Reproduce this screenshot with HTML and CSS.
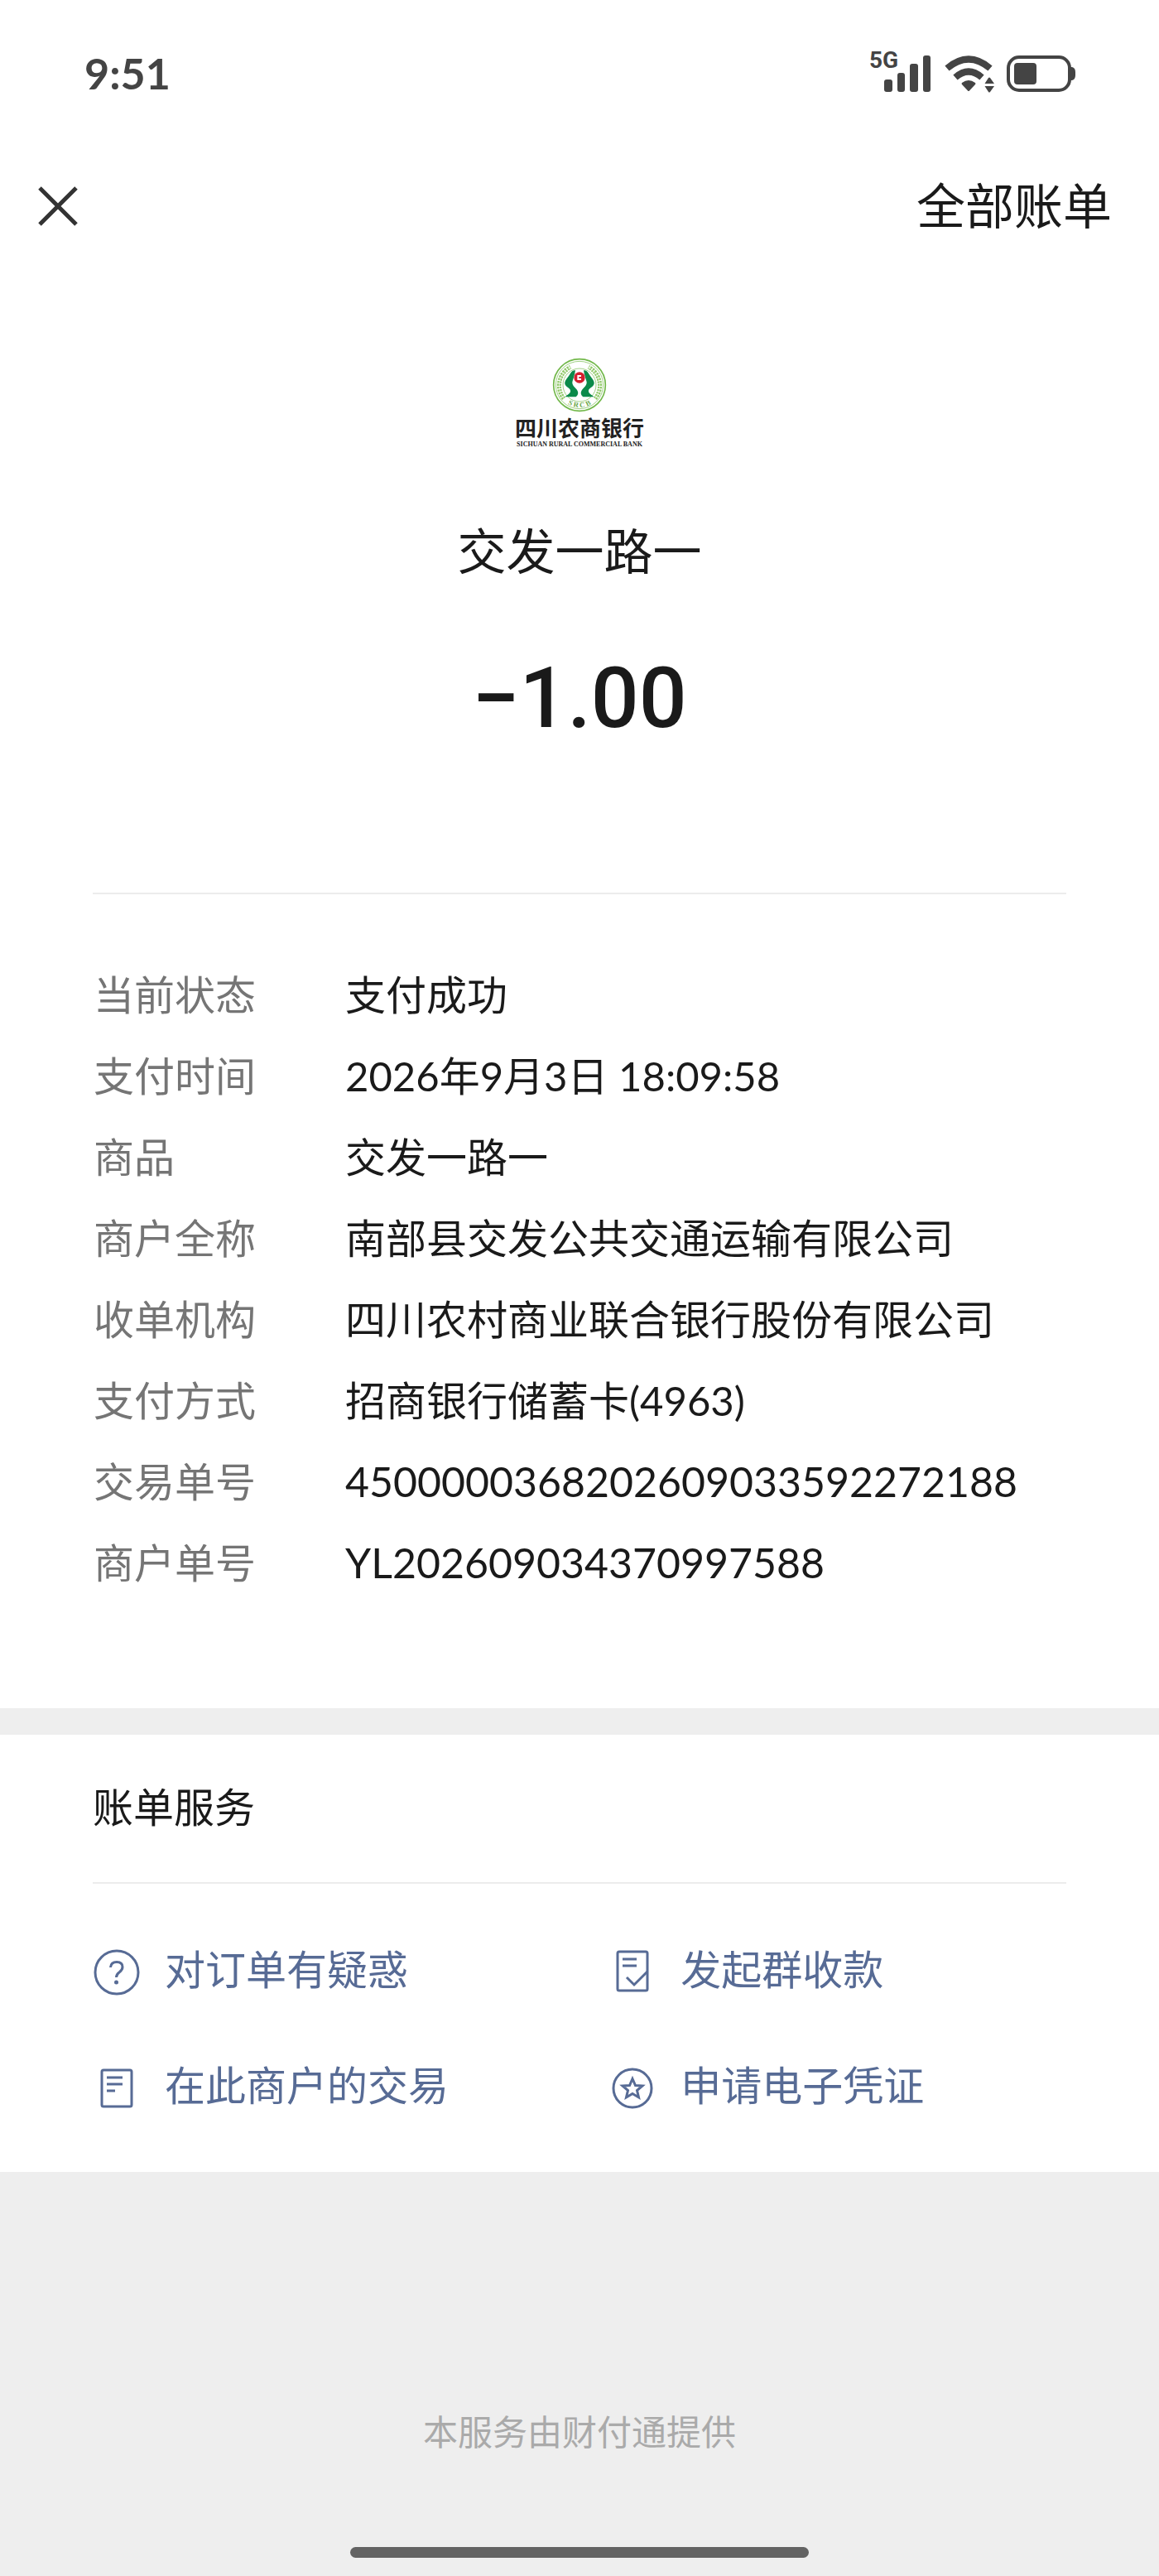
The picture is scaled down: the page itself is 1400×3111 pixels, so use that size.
FILE: index.html
```
<!DOCTYPE html>
<html lang="zh-CN">
<head>
    <meta charset="UTF-8">
    <meta name="viewport" content="width=device-width, initial-scale=1.0">
    <title>账单详情</title>
    <link rel="stylesheet" href="styles.css">
</head>
<body>
    <div class="status-bar">
        <span class="clock">9:51</span>
        <div class="status-icons">
            <svg class="signal" width="77" height="68" viewBox="0 -5 77 68" aria-hidden="true">
                <text class="network" x="1" y="22">5G</text>
                <rect x="19" y="36" width="10" height="15" rx="3"/>
                <rect x="35" y="28" width="9" height="23" rx="3"/>
                <rect x="50" y="17" width="10" height="34" rx="3"/>
                <rect x="66" y="7" width="9" height="44" rx="3"/>
            </svg>
            <svg width="62" height="46" viewBox="0 0 62 46" aria-hidden="true">
                <path class="wave" d="M4 16.500Q30-5.500 56 16.500"/>
                <path class="wave" d="M14 27.500Q30 13.500 46 27.500"/>
                <path d="M22 36Q21 35 22 34Q30 28 38 34Q39 35 38 36L31 43.500Q30 44.500 29 43.500Z"/>
                <path class="halo" d="M55 26L64 35V40L55 47L47 38V35Z"/>
                <path d="M49.500 35L54 28Q55 27 56 28L61 35ZM49.500 38H61L56 45Q55 46 54 45Z"/>
            </svg>
            <svg width="84" height="44" viewBox="0 0 84 44" aria-hidden="true">
                <rect class="battery-case" x="2" y="2" width="74" height="40" rx="13"/>
                <rect x="9" y="9" width="27" height="26" rx="4"/>
                <path d="M77 14h2q4 1 4 6v4q0 5-4 6h-2z"/>
            </svg>
        </div>
    </div>

    <header class="nav">
        <button class="close" aria-label="关闭">
            <svg width="48" height="48" viewBox="0 0 48 48"><path d="M2 2L46 46M46 2L2 46"/></svg>
        </button>
        <a class="all-bills" href="#">全部账单</a>
    </header>

    <main>
        <section class="bill">
            <div class="brand">
                <svg class="seal" width="66" height="66" viewBox="0 0 198 198" aria-hidden="true">
                    <circle class="ring" cx="99" cy="99" r="94"/>
                    <circle class="ring thin" cx="99" cy="99" r="86"/>
                    <circle class="ring thin" cx="99" cy="99" r="60"/>
                    <path class="wheat" d="M42 148A75 75 0 0 1 66 34"/>
                    <path class="wheat" d="M156 148A75 75 0 0 0 132 34"/>
                    <path class="stem" d="M42 148A75 75 0 0 1 66 34M156 148A75 75 0 0 0 132 34"/>
                    <path class="figure" d="M84 46C72 44 68 54 60 66C50 80 40 90 50 102C58 110 68 114 66 122C64 132 54 134 46 142H86C96 134 96 124 88 114C78 104 70 96 74 84C78 72 82 60 84 46Z"/>
                    <path class="figure" d="M114 46C126 44 130 54 138 66C148 80 158 90 148 102C140 110 130 114 132 122C134 132 144 134 152 142H112C102 134 102 124 110 114C120 104 128 96 124 84C120 72 116 60 114 46Z"/>
                    <circle class="coin" cx="99" cy="72" r="20"/>
                    <path class="coin-hole" d="M105 66H94V78H105"/>
                    <path id="arc" fill="none" d="M18 99A81 81 0 0 0 180 99"/>
                    <text class="seal-text"><textPath href="#arc" startOffset="50%">S R C B</textPath></text>
                </svg>
                <p class="bank-name">四川农商银行</p>
                <p class="bank-name-en">SICHUAN RURAL COMMERCIAL BANK</p>
            </div>
            <h1 class="payee">交发一路一</h1>
            <p class="amount">−1.00</p>

            <dl class="details">
                <div class="row"><dt>当前状态</dt><dd>支付成功</dd></div>
                <div class="row"><dt>支付时间</dt><dd>2026年9月3日 18:09:58</dd></div>
                <div class="row"><dt>商品</dt><dd>交发一路一</dd></div>
                <div class="row"><dt>商户全称</dt><dd>南部县交发公共交通运输有限公司</dd></div>
                <div class="row"><dt>收单机构</dt><dd>四川农村商业联合银行股份有限公司</dd></div>
                <div class="row"><dt>支付方式</dt><dd>招商银行储蓄卡(4963)</dd></div>
                <div class="row"><dt>交易单号</dt><dd class="number">4500000368202609033592272188</dd></div>
                <div class="row"><dt>商户单号</dt><dd class="number">YL202609034370997588</dd></div>
            </dl>
        </section>

        <section class="services">
            <h2>账单服务</h2>
            <nav class="links">
                <a href="#">
                    <svg width="56" height="56" viewBox="0 0 56 56" aria-hidden="true">
                        <circle cx="28" cy="28" r="26"/>
                        <path d="M20.500 22Q21 15.500 28 15.500Q35 15.500 35 21.500Q35 25 31 28Q27.500 30.500 27.500 34"/>
                        <circle class="dot" cx="27.500" cy="40" r="2.500"/>
                    </svg>
                    对订单有疑惑
                </a>
                <a href="#">
                    <svg width="56" height="56" viewBox="0 0 56 56" aria-hidden="true">
                        <rect x="10" y="3" width="36" height="47" rx="2"/>
                        <path d="M16 12H33M16 20H33M21 34L30 43L46 27"/>
                    </svg>
                    发起群收款
                </a>
                <a href="#">
                    <svg width="56" height="56" viewBox="0 0 56 56" aria-hidden="true">
                        <rect x="10" y="6" width="36" height="44" rx="2"/>
                        <path d="M16 15H35M16 23H35M16 31H26"/>
                    </svg>
                    在此商户的交易
                </a>
                <a href="#">
                    <svg width="56" height="56" viewBox="0 0 56 56" aria-hidden="true">
                        <circle cx="28" cy="28" r="23"/>
                        <path d="M28 16.500L31.500 24.500L40 25L33.500 30.500L35.500 39L28 34.500L20.500 39L22.500 30.500L16 25L24.500 24.500Z"/>
                    </svg>
                    申请电子凭证
                </a>
            </nav>
        </section>
    </main>

    <footer>
        <p>本服务由财付通提供</p>
        <div class="home-indicator"></div>
    </footer>
</body>
</html>
```
FILE: styles.css
```
:root {
    --text: #1a1a1a;
    --label: #757575;
    --link: #576b95;
    --line: #ececec;
    --gray: #eeeeee;
    --status: #444;
}
* {
    box-sizing: border-box;
    margin: 0;
    padding: 0;
}
body {
    display: flex;
    flex-direction: column;
    min-height: 100vh;
    background: var(--gray);
    color: var(--text);
    font-family: Lato, "Noto Sans CJK SC", sans-serif;
    font-size: 49px;
}
a {
    color: inherit;
    text-decoration: none;
}

/* status bar */
.status-bar {
    display: flex;
    justify-content: space-between;
    align-items: center;
    height: 178px;
    padding: 0 100px 0 102px;
    background: white;
    color: var(--status);
}
.clock {
    padding-bottom: 2px;
    font-size: 52px;
    font-weight: 700;
}
.status-icons {
    display: flex;
    align-items: center;
    gap: 14px;
    fill: var(--status);
}
.signal {
    overflow: visible;
}
.network {
    font-family: Roboto, sans-serif;
    font-size: 28px;
    font-weight: 700;
}
.wave {
    fill: none;
    stroke: var(--status);
    stroke-width: 8;
}
.halo {
    fill: white;
}
.battery-case {
    fill: none;
    stroke: var(--status);
    stroke-width: 4;
}

/* top navigation */
.nav {
    display: flex;
    justify-content: space-between;
    align-items: center;
    height: 142px;
    padding: 0 57px 0 46px;
    background: white;
}
.close {
    display: flex;
    border: none;
    background: none;
    cursor: pointer;
}
.close path {
    stroke: #333;
    stroke-width: 5;
}
.all-bills {
    font-size: 59px;
    line-height: 80px;
}

/* bill */
.bill {
    padding: 112px 112px 127px;
    background: white;
    text-align: center;
}
.brand {
    display: flex;
    flex-direction: column;
    align-items: center;
    color: #222;
}
.seal {
    margin-bottom: 4px;
}
.ring {
    fill: none;
    stroke: #72b84a;
    stroke-width: 5;
}
.ring.thin {
    stroke-width: 2;
}
.wheat {
    fill: none;
    stroke: #8fc866;
    stroke-width: 15;
    stroke-dasharray: 7 3;
}
.stem {
    fill: none;
    stroke: white;
    stroke-width: 2;
}
.figure {
    fill: #0b8a4a;
}
.coin {
    fill: #d3202f;
}
.coin-hole {
    fill: none;
    stroke: white;
    stroke-width: 6;
}
.seal-text {
    fill: #6aa84a;
    font-family: "Liberation Serif", serif;
    font-size: 26px;
    font-weight: 700;
    text-anchor: middle;
}
.bank-name {
    font-size: 26px;
    font-weight: 700;
    line-height: 30px;
}
.bank-name-en {
    font-family: "Liberation Serif", serif;
    font-size: 8px;
    font-weight: 700;
    line-height: 10px;
}
.payee {
    margin-top: 84px;
    font-size: 59px;
    font-weight: 400;
    line-height: 80px;
}
.amount {
    margin-top: 77px;
    font-family: Roboto, sans-serif;
    font-size: 102px;
    font-weight: 500;
    line-height: 120px;
}
.details {
    margin-top: 175px;
    padding-top: 72px;
    border-top: 2px solid var(--line);
    text-align: left;
}
.row {
    display: flex;
    padding-left: 1px;
    line-height: 98px;
}
.row dt {
    flex: 0 0 304px;
    color: var(--label);
}
.number {
    font-size: 50px;
}

/* bill services */
.services {
    margin-top: 32px;
    padding: 0 112px 35px;
    background: white;
}
.services h2 {
    padding-bottom: 4px;
    font-size: 49px;
    font-weight: 400;
    line-height: 174px;
    border-bottom: 2px solid var(--line);
}
.links {
    display: grid;
    grid-template-columns: 53% 1fr;
    padding-top: 33px;
    color: var(--link);
}
.links a {
    display: flex;
    align-items: center;
    gap: 30px;
    padding-left: 1px;
    line-height: 140px;
}
.links svg {
    margin-top: 8px;
    fill: none;
    stroke: var(--link);
    stroke-width: 3;
}
.links .dot {
    fill: var(--link);
    stroke: none;
}

/* footer */
footer {
    display: flex;
    flex: 1;
    flex-direction: column;
    justify-content: space-between;
    align-items: center;
    padding: 284px 0 22px;
    color: #aaa;
    font-size: 42px;
    line-height: 60px;
}
.home-indicator {
    width: calc(40% - 6px);
    height: 13px;
    border-radius: 8px;
    background: #636363;
}
```
